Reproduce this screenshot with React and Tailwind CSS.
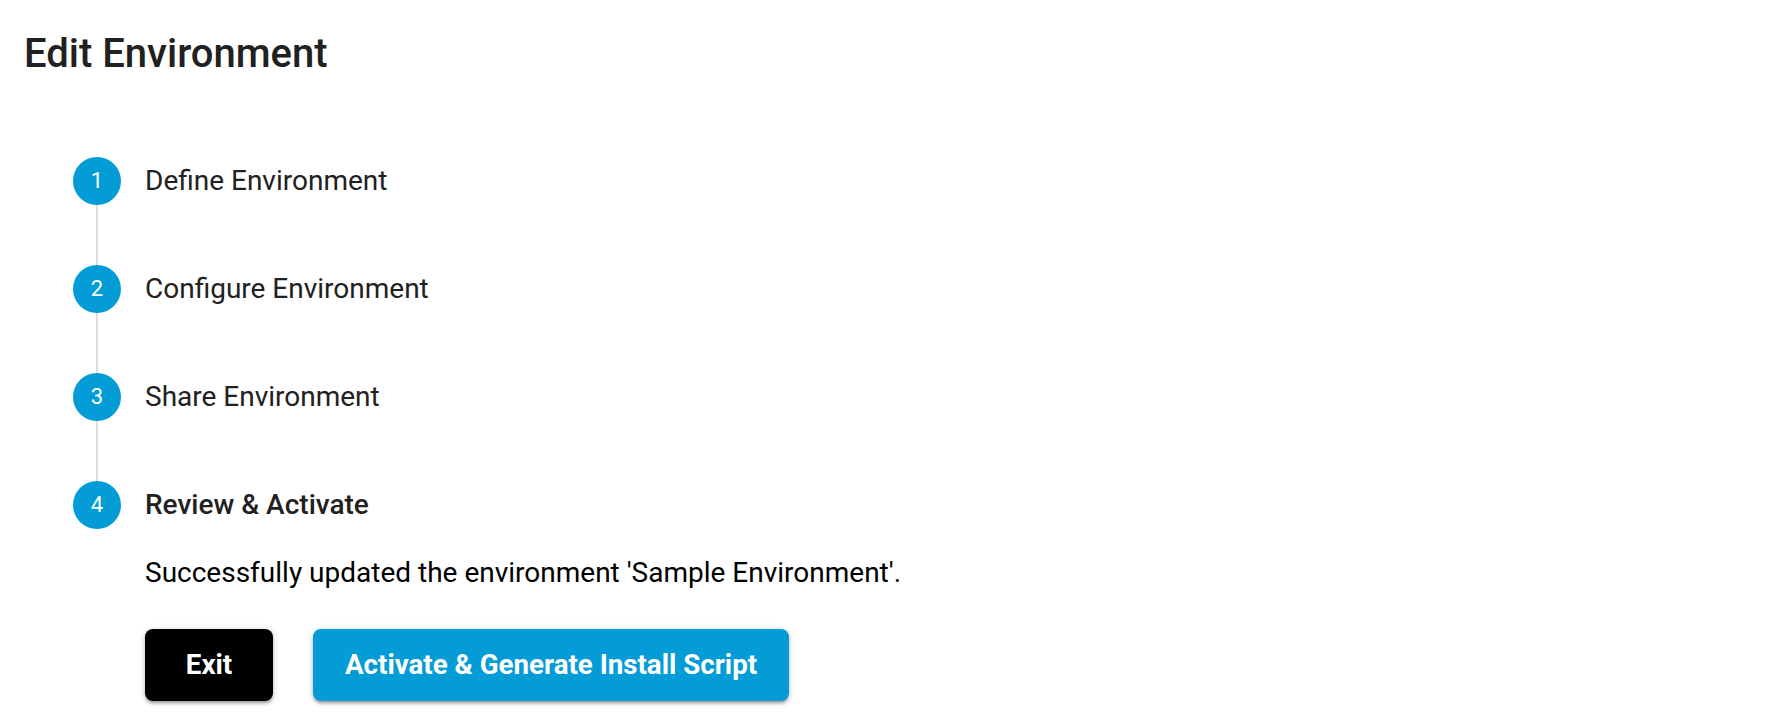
import React from "react";

const steps = [
  { n: 1, label: "Define Environment" },
  { n: 2, label: "Configure Environment" },
  { n: 3, label: "Share Environment" },
  { n: 4, label: "Review & Activate", active: true },
];

export default function App() {
  return (
    <div className="min-h-screen bg-white pl-[24px] pt-[30px] font-['Roboto','Liberation_Sans',sans-serif]">
      <h1 className="text-[40px] leading-[48px] font-medium text-[#212121]">Edit Environment</h1>
      <div className="mt-[79px] pl-[49px] flex flex-col">
        {steps.map((s, i) => (
          <div key={s.n} className="flex flex-col">
            <div className="flex items-center gap-[24px]">
              <div className="w-[48px] h-[48px] rounded-full bg-[#039cd6] flex items-center justify-center text-white text-[22px] leading-none shrink-0">
                {s.n}
              </div>
              <div className={"text-[28px] leading-[36px] text-[#212121] " + (s.active ? "font-medium" : "font-normal")}>
                {s.label}
              </div>
            </div>
            {i < steps.length - 1 && (
              <div className="ml-[23px] w-[2px] h-[60px] bg-[#dcdcdc]" />
            )}
          </div>
        ))}
        <div className="pl-[72px] pt-[26px]">
          <p className="text-[28px] leading-[36px] text-black">
            Successfully updated the environment 'Sample Environment'.
          </p>
          <div className="mt-[38px] flex gap-[40px]">
            <button className="h-[72px] min-w-[128px] px-[32px] rounded-[8px] bg-black text-white text-[27.7px] font-bold shadow-[0_3px_3px_-1px_rgba(0,0,0,0.25),0_2px_4px_rgba(0,0,0,0.14),0_1px_8px_rgba(0,0,0,0.12)]">
              Exit
            </button>
            <button className="h-[72px] min-w-[128px] px-[32px] rounded-[8px] bg-[#039cd6] text-white text-[27.7px] font-bold shadow-[0_3px_3px_-1px_rgba(0,0,0,0.25),0_2px_4px_rgba(0,0,0,0.14),0_1px_8px_rgba(0,0,0,0.12)]">
              Activate &amp; Generate Install Script
            </button>
          </div>
        </div>
      </div>
    </div>
  );
}
